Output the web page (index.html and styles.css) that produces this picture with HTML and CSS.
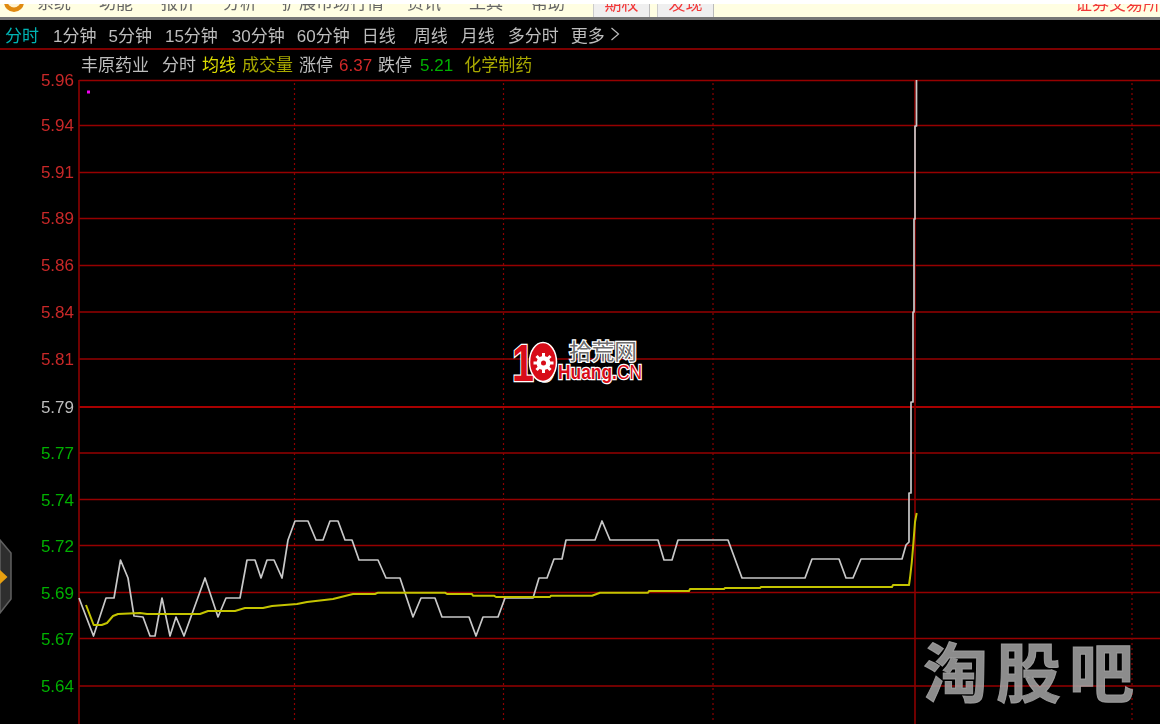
FILE: index.html
```
<!DOCTYPE html>
<html lang="zh">
<head>
<meta charset="utf-8">
<title>丰原药业 分时</title>
<link rel="stylesheet" href="styles.css">
</head>
<body>
<div class="app">
  <header class="menubar">
    <svg class="applogo" width="22" height="10" viewBox="0 0 22 10"><circle cx="11" cy="-2" r="10" fill="#e08a10"/><circle cx="11" cy="-3" r="6.5" fill="#fff3d0"/></svg>
    <nav class="menu">
      <span>系统</span><span>功能</span><span>报价</span><span>分析</span><span class="menu-wide">扩展市场行情</span><span>资讯</span><span>工具</span><span>帮助</span>
    </nav>
    <span class="menu-tab">期权</span>
    <span class="menu-tab">发现</span>
    <span class="notice">证券交易所公告</span>
  </header>

  <nav class="tabs">
    <span class="tab-on">分时</span>
    <span class="m2">1分钟</span>
    <span>5分钟</span>
    <span class="m1">15分钟</span>
    <span class="m2">30分钟</span>
    <span>60分钟</span>
    <span>日线</span>
    <span class="m6">周线</span>
    <span class="m1">月线</span>
    <span class="m1">多分时</span>
    <span>更多<svg class="chev" width="10" height="14" viewBox="0 0 10 14"><polyline points="1.5,1 8.5,7 1.5,13" fill="none" stroke="#bdbdbd" stroke-width="1.2"/></svg></span>
  </nav>

  <div class="info">
    <span class="name">丰原药业</span>
    <span class="mode">分时</span>
    <span class="yellow">均线</span>
    <span class="olive">成交量</span>
    <span>涨停</span>
    <span class="red">6.37</span>
    <span>跌停</span>
    <span class="green">5.21</span>
    <span class="sector olive">化学制药</span>
  </div>

  <svg class="chart" width="1160" height="644" viewBox="0 80 1160 644">
    <g class="hgrid">
      <line x1="79" x2="1160" y1="80.5" y2="80.5"/><line x1="79" x2="1160" y1="125.5" y2="125.5"/><line x1="79" x2="1160" y1="172.5" y2="172.5"/><line x1="79" x2="1160" y1="218.5" y2="218.5"/><line x1="79" x2="1160" y1="265.5" y2="265.5"/><line x1="79" x2="1160" y1="312" y2="312"/><line x1="79" x2="1160" y1="359" y2="359"/><line class="mid" x1="79" x2="1160" y1="407" y2="407"/><line x1="79" x2="1160" y1="453" y2="453"/><line x1="79" x2="1160" y1="499.5" y2="499.5"/><line x1="79" x2="1160" y1="545.5" y2="545.5"/><line x1="79" x2="1160" y1="592.5" y2="592.5"/><line x1="79" x2="1160" y1="638.5" y2="638.5"/><line x1="79" x2="1160" y1="686" y2="686"/>
    </g>
    <g class="vdots">
      <line x1="294.5" x2="294.5" y1="83" y2="722"/><line x1="503.5" x2="503.5" y1="83" y2="722"/><line x1="713" x2="713" y1="83" y2="722"/><line x1="1132" x2="1132" y1="83" y2="722"/>
    </g>
    <g class="vsolid">
      <line x1="79" x2="79" y1="80" y2="724"/><line x1="915" x2="915" y1="80" y2="724"/>
    </g>
    <g class="axis up">
      <text x="74" y="86">5.96</text><text x="74" y="131">5.94</text><text x="74" y="178">5.91</text><text x="74" y="224">5.89</text><text x="74" y="271">5.86</text><text x="74" y="318">5.84</text><text x="74" y="365">5.81</text>
    </g>
    <g class="axis flat"><text x="74" y="413">5.79</text></g>
    <g class="axis down">
      <text x="74" y="459">5.77</text><text x="74" y="506">5.74</text><text x="74" y="552">5.72</text><text x="74" y="599">5.69</text><text x="74" y="645">5.67</text><text x="74" y="692">5.64</text>
    </g>
    <rect class="dot" x="87" y="90.5" width="3" height="3"/>
    <polyline class="price" points="79,598 93.5,636 106,598 114,598 120.5,560 128,578 134,616 143,617 150,636 155,636 162,598 170,636 176,617 184,636 205,578 218,617 226,598 240,598 247,560 255,560 261,578 267,560 274,560 282,578 288,540 295,521 308,521 316,540 323,540 330,521 338,521 345,540 352,540 359,560 378,560 386,578 400,578 413,617 421,598 435,598 442,617 469,617 476,636 483,617 498,617 505,598 533,598 539,578 547,578 554,559 562,559 566,540 595,540 602,521 610,540 658,540 664,560 672,560 678,540 728,540 742,578 805,578 812,559 839,559 846,578 853,578 861,559 902,559 906,545 909,542 909,493 911,493 911,402 913,402 913,312 914,312 914,219 915,219 915,126 916.5,126 916.5,80"/>
    <polyline class="avg" points="86,605 93.7,625 101.7,625 107,623 113,616 118,614 140,613 147,614 200,614 208,611 235,611 245,608 263,608 272,606 297,604 307,602 333,599 353,594 375,594 378,592.7 445,592.7 447,594 472,594 473,595.7 494,595.7 496,597 550,597 551,595.7 592,595.7 600,592.7 648,592.7 649,591 689,591 690,589 724,589 725,588 760,588 761,587 892,587 893,585 909,585 910,578 911.7,563 913,548 915,522 916.7,513"/>
    <polygon class="handle" points="0,540 11,553 11,599 0,613"/>
    <polygon class="handle-arrow" points="0,570 7.5,577 0,584"/>
  </svg>

  <svg class="sitelogo" width="140" height="50" viewBox="0 0 140 50">
    <text class="ten" x="0" y="43" textLength="44" lengthAdjust="spacingAndGlyphs">10</text>
    <ellipse class="zero" cx="31" cy="24" rx="13.5" ry="19.5"/>
    <g transform="translate(31.5 25)">
      <circle r="7" fill="#fff"/>
      <g class="teeth"><line x1="0" y1="-10" x2="0" y2="10"/><line x1="-10" y1="0" x2="10" y2="0"/><line x1="-7" y1="-7" x2="7" y2="7"/><line x1="-7" y1="7" x2="7" y2="-7"/></g>
      <circle r="2.5" fill="#d80c18"/>
    </g>
    <text class="cn" x="57" y="21" textLength="68" lengthAdjust="spacingAndGlyphs">拾荒网</text>
    <text class="huang" x="46" y="41" textLength="84" lengthAdjust="spacingAndGlyphs">Huang.<tspan class="huang-cn">CN</tspan></text>
  </svg>

  <div class="watermark">淘股吧</div>
</div>
</body>
</html>
```

FILE: styles.css
```
* { box-sizing: border-box; }
html { background: #fff; }
body {
  margin: 0;
  font-family: "Liberation Sans", "Noto Sans CJK SC", sans-serif;
  font-size: 17px;
}
.app {
  position: relative;
  width: 1160px;
  height: 724px;
  overflow: hidden;
  background: #000;
  color: #bdbdbd;
}
.menubar {
  display: flex;
  height: 20px;
  overflow: hidden;
  padding-left: 3px;
  border-top: 4px solid #fff;
  border-bottom: 3px solid #777;
  background: #fffee2;
  color: #666;
  line-height: 17px;
}
.applogo { flex: none; width: 22px; height: 10px; }
.menu {
  display: flex;
  gap: 28px;
  margin: -9px 0 0 12px;
  filter: blur(.5px);
}
.menu-wide { margin: 0 -5px 0 -3px; }
.menu-tab {
  flex: none;
  width: 57px;
  margin-left: 7px;
  background: #efefef;
  border-right: 1px solid #bbb;
  border-left: 1px solid #ccc;
  color: #f23838;
  text-align: center;
  line-height: 1px;
  filter: blur(.4px);
}
.menu-tab:first-of-type { margin-left: 28px; }
.notice {
  margin-left: auto;
  width: 85px;
  flex: none;
  white-space: nowrap;
  overflow: hidden;
  color: #f23838;
  line-height: 1px;
  filter: blur(.4px);
}
.tabs {
  display: flex;
  align-items: center;
  gap: 12px;
  height: 30px;
  padding-left: 5px;
  border-bottom: 2px solid #7c0000;
  filter: blur(.4px);
}
.tabs span { display: flex; align-items: center; white-space: nowrap; }
.tab-on { color: #00b4b4; }
.m1 { margin-left: 1px; }
.m2 { margin-left: 2px; }
.m6 { margin-left: 6px; }
.chev { margin-left: 5px; }
.info {
  display: flex;
  align-items: baseline;
  gap: 6px;
  height: 30px;
  padding-top: 6px;
  padding-left: 81px;
  line-height: 20px;
  filter: blur(.4px);
}
.mode { margin-left: 7px; }
.sector { margin-left: 5px; }
.yellow { color: #dcdc00; }
.olive { color: #a8a800; }
.red { color: #d02828; }
.green { color: #00b000; margin-left: 2px; }
.chart { display: block; overflow: visible; }
.hgrid line { stroke: #960000; stroke-width: 1.7; }
.hgrid .mid { stroke: #a80000; stroke-width: 2.2; }
.vdots line { stroke: #8c0000; stroke-width: 1.2; stroke-dasharray: 2 3; }
.vsolid line { stroke: #8c0000; stroke-width: 1.6; }
.axis text {
  font-family: "Liberation Sans", sans-serif;
  font-size: 17px;
  text-anchor: end;
  filter: blur(.4px);
}
.up text { fill: #c82828; }
.flat text { fill: #bdbdbd; }
.down text { fill: #00b000; }
.dot { fill: #f000f0; }
.price, .avg { fill: none; stroke-linejoin: round; }
.price { stroke: #c8c8c8; stroke-width: 1.7; }
.avg { stroke: #c4c400; stroke-width: 2; }
.handle { fill: #2e2e2e; stroke: #606060; stroke-width: 1.5; }
.handle-arrow { fill: #e8a010; }
.sitelogo {
  position: absolute;
  left: 512px;
  top: 338px;
  overflow: visible;
}
.ten {
  font-family: "Liberation Sans", sans-serif;
  font-size: 52px;
  font-weight: 700;
  fill: #d80c18;
  stroke: #fff;
  stroke-width: 2.5;
  paint-order: stroke;
}
.zero { fill: #d80c18; stroke: #fff; stroke-width: 1.5; }
.teeth line { stroke: #fff; stroke-width: 3; }
.cn {
  font-family: "Noto Sans CJK SC", sans-serif;
  font-size: 22px;
  fill: #6e6e6e;
  stroke: #fff;
  stroke-width: 2.5;
  paint-order: stroke;
}
.huang {
  font-family: "Liberation Sans", sans-serif;
  font-size: 20px;
  font-weight: 700;
  fill: #d80c18;
  stroke: #fff;
  stroke-width: 2.5;
  paint-order: stroke;
}
.huang-cn { font-weight: 400; }
.watermark {
  position: absolute;
  left: 923px;
  top: 621px;
  font-family: "Noto Sans CJK SC", sans-serif;
  font-size: 65px;
  font-weight: 700;
  line-height: 96px;
  letter-spacing: 8px;
  white-space: nowrap;
  color: rgba(165, 165, 165, .85);
  -webkit-text-stroke: 1px rgba(165, 165, 165, .85);
  filter: blur(.7px);
}
```
